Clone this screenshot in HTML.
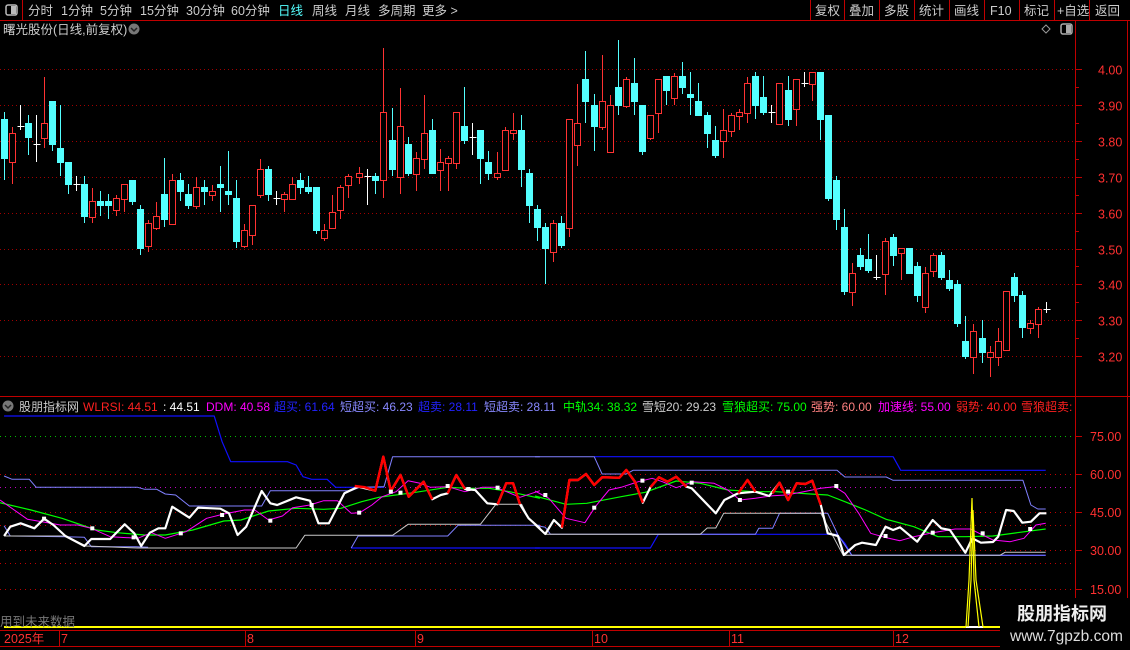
<!DOCTYPE html>
<html><head><meta charset="utf-8"><style>
html,body{margin:0;padding:0;background:#000;width:1130px;height:650px;overflow:hidden}
svg{position:absolute;left:0;top:0}
text{font-family:"Liberation Sans","Noto Sans CJK SC",sans-serif}
</style></head><body>
<svg id="s" width="1130" height="650" viewBox="0 0 1130 650" xmlns="http://www.w3.org/2000/svg">
<rect width="1130" height="650" fill="#000"/>
<!-- toolbar -->
<line x1="0" y1="20.5" x2="1130" y2="20.5" stroke="#c00000"/>
<line x1="22.5" y1="0" x2="22.5" y2="20" stroke="#c00000"/>
<rect x="6" y="5" width="11" height="10" rx="2" fill="none" stroke="#bbb" stroke-width="1.5"/>
<rect x="11" y="6" width="5" height="8" fill="#bbb"/>
<g font-size="12.5" fill="#ccc">
<text x="28" y="15">分时</text><text x="61" y="15">1分钟</text><text x="100" y="15">5分钟</text>
<text x="140" y="15">15分钟</text><text x="186" y="15">30分钟</text><text x="231" y="15">60分钟</text>
<text x="278" y="15" fill="#54ffff">日线</text><text x="312" y="15">周线</text><text x="345" y="15">月线</text>
<text x="378" y="15">多周期</text><text x="422" y="15">更多 &gt;</text>
<text x="815" y="15">复权</text><text x="849" y="15">叠加</text><text x="884" y="15">多股</text>
<text x="919" y="15">统计</text><text x="954" y="15">画线</text><text x="990" y="15">F10</text>
<text x="1024" y="15">标记</text><text x="1057" y="15">+自选</text><text x="1095" y="15">返回</text>
</g>
<g stroke="#c00000"><line x1="810.5" y1="0" x2="810.5" y2="20"/><line x1="844.5" y1="0" x2="844.5" y2="20"/><line x1="879.5" y1="0" x2="879.5" y2="20"/><line x1="914.5" y1="0" x2="914.5" y2="20"/><line x1="949.5" y1="0" x2="949.5" y2="20"/><line x1="984.5" y1="0" x2="984.5" y2="20"/><line x1="1019.5" y1="0" x2="1019.5" y2="20"/><line x1="1054.5" y1="0" x2="1054.5" y2="20"/><line x1="1089.5" y1="0" x2="1089.5" y2="20"/></g>
<text x="3" y="34" font-size="12.5" fill="#ccc">曙光股份(日线,前复权)</text>
<circle cx="134" cy="29" r="5.5" fill="#777"/><path d="M131 28 L134 31 L137 28" stroke="#222" stroke-width="1.5" fill="none"/>
<path d="M1046 25 L1050 29 L1046 33 L1042 29 Z" fill="none" stroke="#999"/>
<rect x="1061" y="24" width="11" height="10" rx="2" fill="none" stroke="#aaa" stroke-width="1.5"/><rect x="1066" y="25" width="5" height="8" fill="#aaa"/>
<!-- axes -->
<line x1="1075.5" y1="20" x2="1075.5" y2="630" stroke="#c00000"/>
<line x1="1127.5" y1="20" x2="1127.5" y2="630" stroke="#c00000"/>
<line x1="0" y1="396.5" x2="1130" y2="396.5" stroke="#c00000"/>
<line x1="0" y1="630.5" x2="1000" y2="630.5" stroke="#c00000"/>
<g id="grid"></g>
<g id="cand"></g>
<!-- indicator header -->
<circle cx="8" cy="406" r="5.5" fill="#777"/><path d="M5 405 L8 408 L11 405" stroke="#222" stroke-width="1.5" fill="none"/>
<g font-size="12" >
<text x="19" y="411" fill="#ccc">股朋指标网</text>
<text x="83" y="411" fill="#ff2020">WLRSI: 44.51</text>
<text x="163" y="411" fill="#fff">: 44.51</text>
<text x="206" y="411" fill="#ff00ff">DDM: 40.58</text>
<text x="274" y="411" fill="#2222ff">超买: 61.64</text>
<text x="340" y="411" fill="#8888ff">短超买: 46.23</text>
<text x="418" y="411" fill="#2222ff">超卖: 28.11</text>
<text x="484" y="411" fill="#8888ff">短超卖: 28.11</text>
<text x="563" y="411" fill="#00ff00">中轨34: 38.32</text>
<text x="642" y="411" fill="#ccc">雪短20: 29.23</text>
<text x="722" y="411" fill="#00ff00">雪狼超买: 75.00</text>
<text x="811" y="411" fill="#ff8080">强势: 60.00</text>
<text x="878" y="411" fill="#ff00ff">加速线: 55.00</text>
<text x="956" y="411" fill="#ff2020">弱势: 40.00</text>
<text x="1021" y="411" fill="#ff2020">雪狼超卖:</text>
</g>
<g id="ind"></g>
<!-- yellow baseline + spike -->
<line x1="4" y1="627" x2="1075" y2="627" stroke="#ffff00" stroke-width="2"/>
<line x1="966" y1="627" x2="983" y2="627" stroke="#fff" stroke-width="2"/>
<path d="M966 627 L969 580 L972 498 L974 580 L979 627" stroke="#ffff00" fill="none" stroke-width="1.2"/>
<path d="M968 627 L971 580 L973 510 L976 580 L983 627" stroke="#ffff00" fill="none" stroke-width="1.2"/>
<text x="0" y="626" font-size="12.5" fill="#777">用到未来数据</text>
<!-- time axis -->
<g stroke="#c00000"><line x1="59.5" y1="631" x2="59.5" y2="646"/><line x1="245.5" y1="631" x2="245.5" y2="646"/><line x1="415.5" y1="631" x2="415.5" y2="646"/><line x1="592.5" y1="631" x2="592.5" y2="646"/><line x1="729.5" y1="631" x2="729.5" y2="646"/><line x1="893.5" y1="631" x2="893.5" y2="646"/>
<line x1="0" y1="646.5" x2="1000" y2="646.5"/></g>
<g font-size="12.5" fill="#ff3030"><text x="4" y="643">2025年</text><text x="61" y="643">7</text><text x="247" y="643">8</text><text x="417" y="643">9</text><text x="594" y="643">10</text><text x="731" y="643">11</text><text x="895" y="643">12</text></g>
<!-- watermark -->
<rect x="1000" y="598" width="130" height="52" fill="#000"/>
<text x="1017" y="620" font-size="18" font-weight="bold" fill="#eee">股朋指标网</text>
<text x="1010" y="641" font-size="15.5" fill="#ddd">www.7gpzb.com</text>
</svg>
<script>
var NS="http://www.w3.org/2000/svg";
function el(p,t,a){var e=document.createElementNS(NS,t);for(var k in a)e.setAttribute(k,a[k]);p.appendChild(e);return e;}
var S=document.getElementById('s');
var G=document.getElementById('grid');
// price grid
var pl=["4.00","3.90","3.80","3.70","3.60","3.50","3.40","3.30","3.20"];
for(var k=0;k<9;k++){var y=Math.round(69.3+k*35.84)+0.5;
 el(G,'line',{x1:0,y1:y,x2:1075,y2:y,stroke:'#a00000','stroke-dasharray':'1 3'});
 el(G,'line',{x1:1075,y1:y,x2:1082,y2:y,stroke:'#c00000'});
 var t=el(G,'text',{x:1098,y:y+5,'font-size':12.5,fill:'#ff3030'});t.textContent=pl[k];
 if(k<8){var y2=Math.round(69.3+k*35.84+17.92)+0.5;el(G,'line',{x1:1075,y1:y2,x2:1079,y2:y2,stroke:'#c00000'});}
}
// indicator grid
var ig=[[436,'#00c000'],[474,'#c00000'],[487,'#c000c0'],[512,'#c00000'],[525,'#c00000'],[550,'#c00000'],[563,'#c00000'],[589,'#c00000']];
ig.forEach(function(g){el(G,'line',{x1:0,y1:g[0]+.5,x2:1075,y2:g[0]+.5,stroke:g[1],'stroke-dasharray':'1 4'});});
[[436,"75.00"],[474,"60.00"],[512,"45.00"],[550,"30.00"],[589,"15.00"]].forEach(function(a){
 el(G,'line',{x1:1075,y1:a[0]+.5,x2:1082,y2:a[0]+.5,stroke:'#c00000'});
 var t=el(G,'text',{x:1090,y:a[0]+5,'font-size':12.5,fill:'#ff3030'});t.textContent=a[1];});
// candles [x,type,wt,bt,bb,wb]
var C=[[4,'d',112,119,158,180],[12,'u',127,133,162,184],[20,'c',105,126,126,130],[28,'d',115,123,137,155],[36,'c',115,144,144,162],[44,'u',77,123,138,148],[52,'d',101,101,144,151],[60,'d',105,148,162,176],[68,'d',162,162,184,194],[76,'c',176,184,184,191],[84,'d',176,184,216,223],[92,'u',188,201,217,223],[100,'d',191,201,205,216],[108,'d',194,201,205,219],[116,'u',195,198,210,216],[124,'u',184,184,199,212],[132,'d',180,180,201,205],[140,'d',205,209,248,255],[148,'u',220,223,246,252],[156,'u',202,216,228,230],[164,'d',158,194,219,227],[172,'u',174,180,224,224],[180,'d',173,180,191,201],[188,'d',184,194,205,209],[196,'u',177,187,206,209],[204,'d',180,187,191,205],[212,'u',185,191,195,201],[220,'d',166,184,187,212],[228,'d',151,191,194,205],[236,'d',180,198,241,248],[244,'u',224,230,246,248],[252,'u',205,205,235,245],[260,'u',159,169,195,198],[268,'d',166,169,194,201],[276,'c',191,198,198,205],[284,'u',192,194,199,212],[292,'u',177,184,199,199],[300,'d',173,180,187,194],[308,'d',176,187,191,194],[316,'d',187,187,230,234],[324,'u',224,230,238,241],[332,'u',195,212,228,228],[340,'u',185,187,210,219],[348,'u',174,176,185,198],
[359,'u',167,173,177,184],[367,'c',169,176,176,205],[375,'d',173,176,180,194],[383,'u',48,112,180,198],[392,'d',108,140,169,176],[400,'u',88,126,177,194],[408,'d',137,144,173,176],[416,'u',152,158,174,191],[424,'u',95,133,159,169],[432,'d',119,130,173,173],[440,'u',149,162,170,191],[448,'u',156,158,163,191],[456,'u',112,112,163,169],[464,'d',87,126,140,144],[472,'c',123,137,137,155],[480,'d',130,130,158,184],[488,'d',151,162,173,180],[497,'u',152,173,177,180],[505,'u',127,130,170,170],[513,'u',113,130,133,140],[521,'d',115,130,169,187],[529,'d',169,173,205,223],[537,'d',205,209,227,241],[545,'d',223,227,248,284],[553,'u',220,223,252,262],[561,'d',216,223,245,248],[569,'u',119,119,228,237],[577,'u',84,123,145,166],[585,'d',51,79,101,123],[594,'d',94,105,126,151],[602,'u',55,101,127,130],[610,'u',95,105,152,152],[618,'d',40,87,105,115],[626,'u',77,79,106,108],[634,'d',58,83,101,115],[642,'d',105,105,151,155],[650,'u',115,115,138,140],[658,'u',79,79,113,133],[666,'d',76,76,90,105],[674,'u',73,76,98,105],[682,'d',62,76,87,94],[690,'d',72,94,97,115],[698,'d',83,101,115,115],
[707,'d',112,115,133,148],[715,'d',126,140,155,158],[723,'u',109,130,141,158],[731,'u',113,115,131,137],[739,'u',109,112,116,130],[747,'u',77,83,113,123],[755,'d',72,76,105,119],[763,'d',76,97,112,115],[771,'c',105,112,112,123],[779,'u',83,83,124,124],[788,'d',76,90,119,126],[796,'u',79,79,109,126],[804,'c',72,83,83,87],[812,'u',72,72,84,101],[820,'d',72,72,119,140],[828,'d',115,115,198,201],[836,'d',176,180,219,230],[844,'d',209,227,291,295],[852,'u',263,273,292,306],[860,'d',248,255,266,270],[868,'d',234,259,270,273],[876,'c',255,277,277,280],[885,'u',238,241,274,295],[893,'d',234,237,255,266],[901,'u',248,248,253,280],[909,'d',248,248,273,273],[917,'d',262,266,295,302],[925,'u',267,273,307,313],[933,'u',253,255,271,277],[941,'d',252,255,277,280],[949,'d',270,280,288,291],[957,'d',280,284,323,327],[965,'d',316,341,356,359],[973,'u',324,331,357,374],[982,'d',320,338,352,363],[990,'u',346,352,357,377],[998,'u',328,341,357,366],[1006,'u',291,291,350,350],[1014,'d',273,277,295,302],[1022,'d',291,295,327,338],[1030,'u',320,323,328,334],[1038,'u',307,309,324,338],[1046,'c',302,309,309,313]];
var CG=document.getElementById('cand');
C.forEach(function(c){var x=c[0]+0.5;
 if(c[1]=='c'){el(CG,'line',{x1:x,y1:c[2],x2:x,y2:c[5],stroke:'#fff'});el(CG,'line',{x1:x-3,y1:c[3]+.5,x2:x+4,y2:c[3]+.5,stroke:'#fff'});return;}
 var col=c[1]=='u'?'#ff3232':'#54ffff';
 el(CG,'line',{x1:x,y1:c[2],x2:x,y2:c[5],stroke:col});
 var h=Math.max(c[4]-c[3],1);
 if(c[1]=='u')el(CG,'rect',{x:c[0]-2.5,y:c[3]+.5,width:6,height:h,fill:'#000',stroke:col});
 else el(CG,'rect',{x:c[0]-3,y:c[3],width:7,height:h+1,fill:col});
});
// indicator lines
var IG=document.getElementById('ind');
function conv(p,off){return p.map(function(a){return (off+a[0]/2.904).toFixed(1)+','+(410+a[1]/3).toFixed(1);}).join(' ');}
function pl2(pts,off,col,w){el(IG,'polyline',{points:conv(pts,off),fill:'none',stroke:col,'stroke-width':w,'stroke-linejoin':'round'});}
pl2([[12,18],[622,18],[645,95],[670,155],[835,155],[860,165],[880,200],[905,208],[950,208],[975,232],[1115,232]],0,'#1010ff',1.2);
pl2([[172,140],[1040,140],[1062,181],[1483,181]],535,'#1010ff',1.2);
pl2([[1020,414],[1568,414]],0,'#1010ff',1.2);
pl2([[0,414],[335,414],[358,373],[877,373],[900,400],[920,436],[1483,436]],535,'#1010ff',1.2);
pl2([[12,198],[35,208],[85,208],[105,232],[400,232],[420,238],[455,238],[480,252],[510,255],[550,288],[760,288],[785,242],[1020,242],[1045,232],[1115,230],[1140,140],[1568,140]],0,'#8080ff',1);
pl2([[0,140],[172,140],[195,192],[265,192],[285,181],[877,181],[900,201],[1020,201],[1040,211],[1417,211],[1440,285],[1460,297],[1483,297]],535,'#8080ff',1);
pl2([[12,347],[30,378],[190,380],[245,382],[265,410],[395,410],[430,412]],0,'#8080ff',1);
pl2([[1020,414],[1040,378],[1300,378],[1330,346],[1568,346]],0,'#8080ff',1);
pl2([[0,346],[30,352],[45,373],[640,373],[650,355],[690,355],[710,310],[850,310],[880,375],[920,436],[1483,436]],535,'#8080ff',1);
pl2([[12,378],[190,378],[250,408],[400,414],[860,414],[885,376],[1140,376],[1185,343],[1395,343],[1440,283],[1515,283],[1535,325]],0,'#c8c8c8',1);
pl2([[30,373],[480,373],[500,354],[525,354],[548,310],[830,310],[895,436],[1350,436],[1365,427],[1483,427]],535,'#c8c8c8',1);
pl2([[0,278],[90,300],[180,325],[280,360],[340,368],[420,375],[480,375],[560,360],[650,333],[700,330],[780,303],[860,295],[940,298],[990,295],[1050,275],[1100,262],[1200,248],[1300,232],[1360,235],[1420,235],[1480,245],[1568,265]],0,'#00ff00',1.2);
pl2([[0,258],[90,283],[150,280],[250,260],[320,247],[410,213],[480,220],[560,240],[640,245],[700,245],[800,252],[850,255],[900,275],[960,300],[1020,328],[1100,350],[1170,380],[1250,380],[1330,378],[1400,368],[1483,357]],535,'#00ff00',1.2);
pl2([[0,270],[80,328],[130,337],[175,345],[225,345],[265,355],[320,380],[400,385],[440,368],[480,385],[540,365],[600,325],[650,312],[710,300],[740,300],[780,330],[820,318],[850,293],[900,285],[940,272],[980,272],[1020,310],[1045,308],[1080,285],[1110,260],[1150,245],[1185,212],[1220,220],[1250,232],[1300,230],[1350,245],[1400,232],[1440,232],[1510,262],[1568,242]],0,'#ff00ff',1);
pl2([[0,243],[40,265],[90,325],[145,338],[175,290],[215,240],[250,232],[300,215],[340,205],[370,215],[410,233],[460,215],[520,220],[560,240],[595,270],[640,265],[690,257],[730,255],[780,245],[830,235],[870,230],[900,250],[940,310],[975,370],[1020,383],[1060,392],[1100,380],[1155,368],[1220,357],[1265,357],[1290,370],[1330,390],[1380,395],[1420,385],[1455,345],[1483,340]],535,'#ff00ff',1);
pl2([[12,378],[30,350],[60,340],[100,355],[128,326],[155,345],[190,378],[245,408],[265,387],[320,387],[362,343],[390,370],[410,408],[435,368],[460,355],[480,355],[500,290],[550,323],[575,293],[640,296],[665,310],[690,375],[715,350],[760,243],[785,280],[805,285],[860,262],[900,272],[925,340],[955,340],[1000,250],[1040,230],[1090,242],[1113,140],[1135,243],[1163,195],[1187,260],[1230,215],[1255,268],[1280,255],[1300,250],[1325,195],[1350,237],[1380,240],[1415,280],[1445,283],[1470,220],[1490,220],[1510,283],[1535,325],[1568,355]],0,'#fff',2.2);
pl2([[0,343],[30,372],[55,330],[78,353],[100,210],[125,210],[148,192],[172,225],[195,202],[245,203],[265,180],[290,215],[313,278],[335,232],[360,202],[385,215],[410,200],[440,230],[455,235],[525,310],[550,270],[590,250],[640,245],[680,258],[710,218],[735,270],[760,220],[785,222],[805,212],[830,285],[850,370],[880,378],[897,435],[930,405],[950,398],[990,405],[1018,350],[1040,360],[1060,352],[1110,395],[1155,330],[1180,355],[1205,360],[1250,428],[1270,385],[1295,398],[1330,396],[1345,380],[1368,300],[1390,303],[1415,338],[1440,335],[1465,310],[1485,310]],535,'#fff',2.2);
[[[1030,228],[1060,232],[1090,242],[1113,140],[1135,243],[1163,195],[1187,260],[1230,215],[1255,268]],[[1300,250],[1325,195],[1350,237]],[[1445,283],[1470,220],[1490,220],[1510,283]]].forEach(function(p){pl2(p,0,'#ff0000',2.5);});
[[[78,353],[100,210],[125,210],[148,192],[172,225],[195,202],[245,203],[265,180],[290,215],[313,278]],[[335,232],[360,202],[385,215],[410,200],[440,230]],[[590,250],[617,210],[640,245]],[[690,250],[710,218],[735,270],[760,220],[785,222],[805,212],[830,285]]].forEach(function(p){pl2(p,535,'#ff0000',2.5);});
function mk(p,off){p.forEach(function(a){el(IG,'rect',{x:off+a[0]/2.904-2,y:410+a[1]/3-2,width:4,height:4,fill:'#fff'});});}
mk([[128,326],[268,355],[388,382],[525,370],[645,315],[785,332],[905,285],[1043,308],[1135,245],[1163,248],[1300,228],[1360,237],[1445,233]],0);
mk([[30,255],[172,293],[312,212],[455,218],[595,270],[735,245],[875,228],[1018,378],[1155,368],[1300,370],[1438,357]],535);
</script>
</body></html>
